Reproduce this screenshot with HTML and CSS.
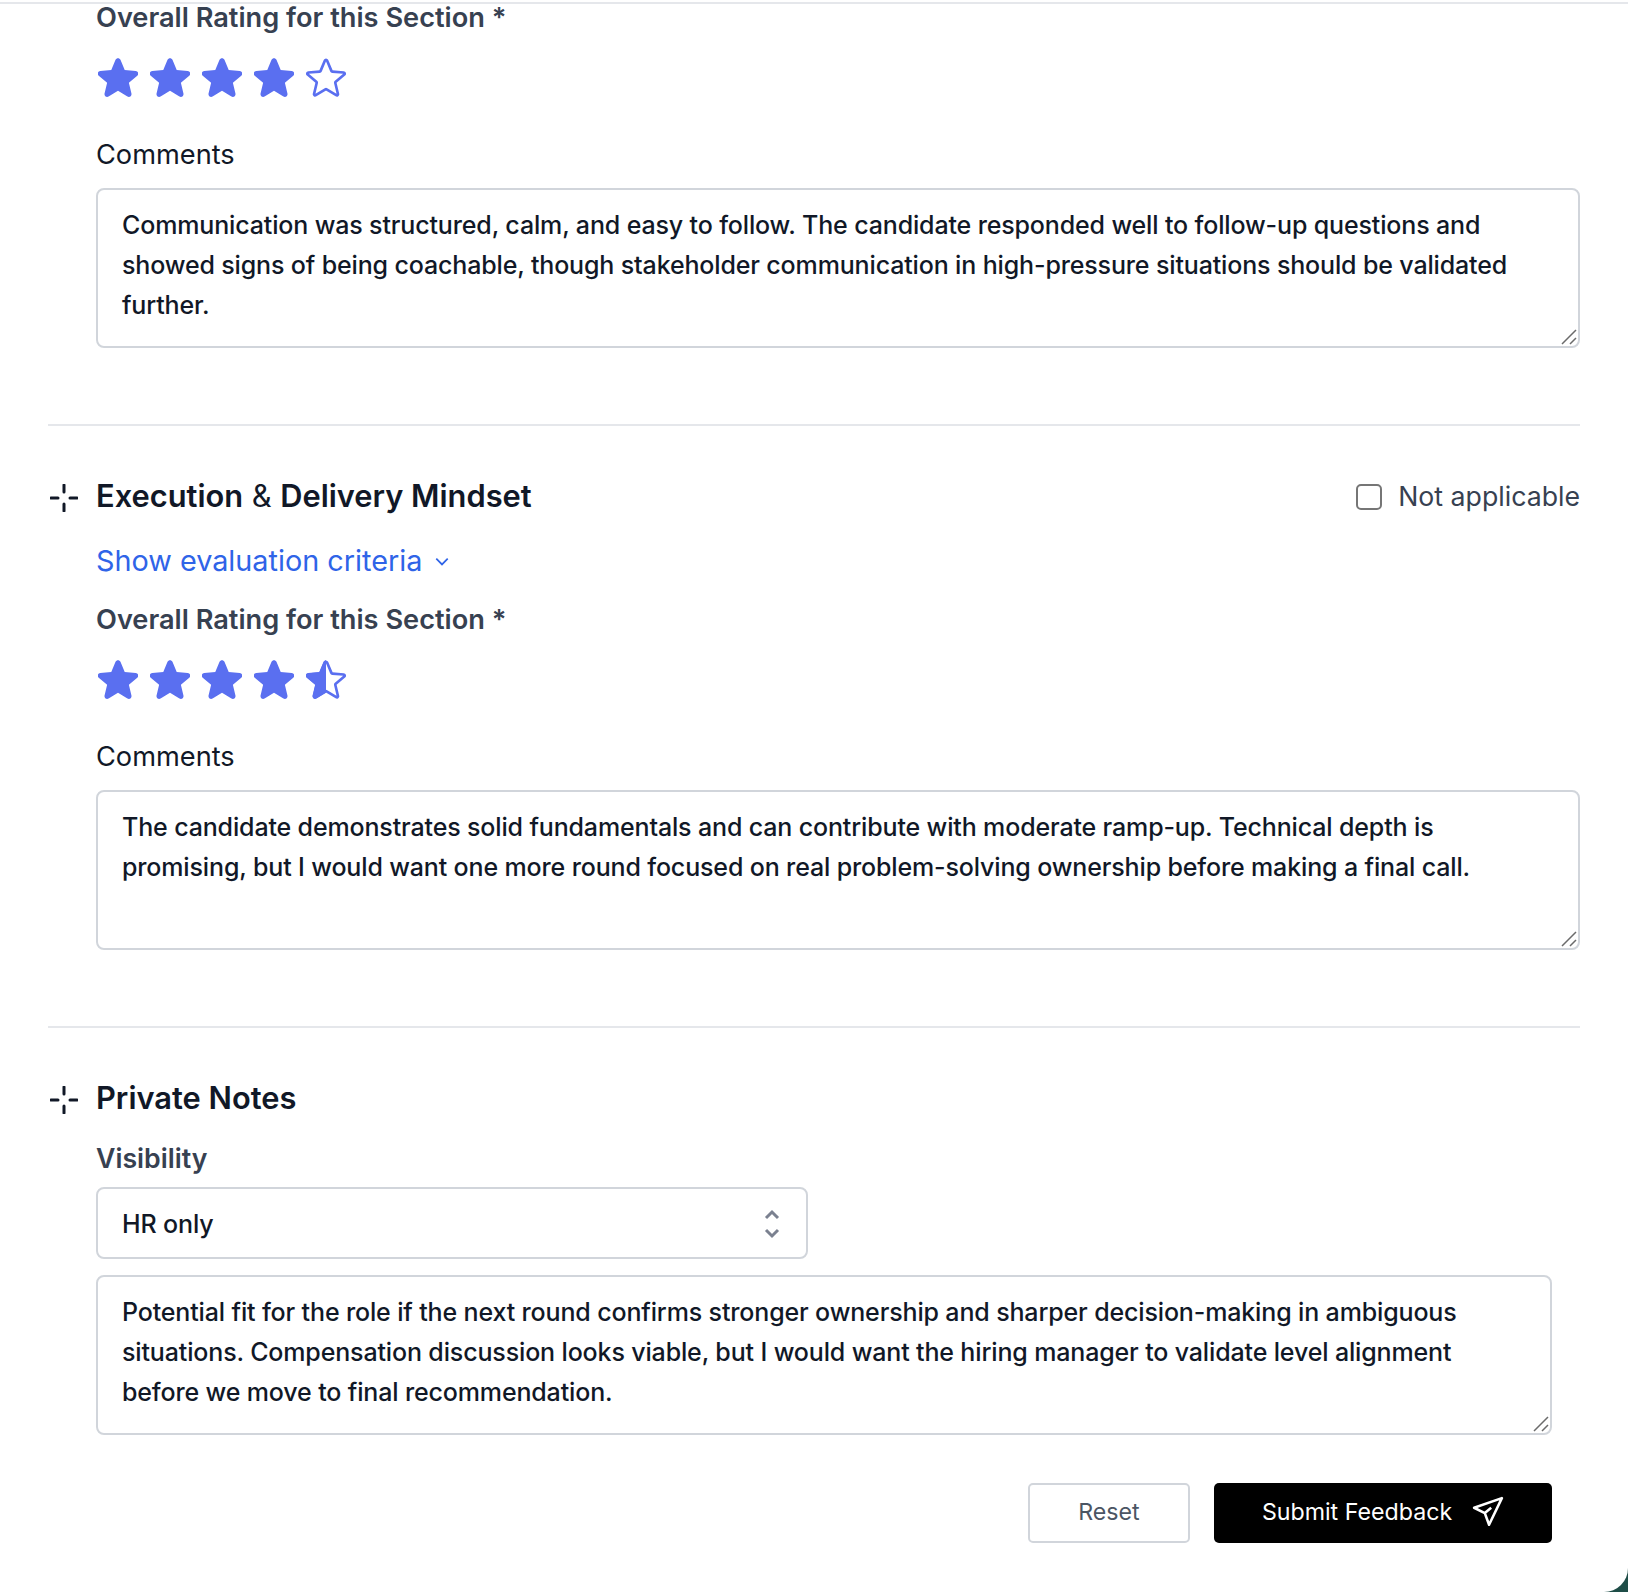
FILE: index.html
```html
<!DOCTYPE html>
<html>

<head>
    <meta charset='utf-8'>
    <title>Feedback</title>
    <link rel="stylesheet" href="styles.css">
</head>

<body>
    <svg class="defs">
        <symbol id="star_full" viewBox="2.2 2.3 19.6 19.6">
            <path class="fill" d="M10.788 3.21c.448-1.077 1.976-1.077 2.424 0l2.082 5.006 5.404.434c1.164.093 1.636 1.545.749 2.305l-4.117 3.527 1.257 5.273c.271 1.136-.964 2.033-1.96 1.425L12 18.354 7.373 21.18c-.996.608-2.231-.29-1.96-1.425l1.257-5.273-4.117-3.527c-.887-.76-.415-2.212.749-2.305l5.404-.434 2.082-5.005Z"/>
        </symbol>
        <symbol id="star_empty" viewBox="2.2 2.3 19.6 19.6">
            <path class="empty" d="M11.48 3.499a.562.562 0 0 1 1.04 0l2.125 5.111a.563.563 0 0 0 .475.345l5.518.442c.499.04.701.663.321.988l-4.204 3.602a.563.563 0 0 0-.182.557l1.285 5.385a.562.562 0 0 1-.84.61l-4.725-2.885a.562.562 0 0 0-.586 0L6.982 20.54a.562.562 0 0 1-.84-.61l1.285-5.386a.562.562 0 0 0-.182-.557l-4.204-3.602a.562.562 0 0 1 .321-.988l5.518-.442a.563.563 0 0 0 .475-.345L11.48 3.5Z"/>
        </symbol>
        <symbol id="star_half" viewBox="2.2 2.3 19.6 19.6">
            <path class="empty" d="M11.48 3.499a.562.562 0 0 1 1.04 0l2.125 5.111a.563.563 0 0 0 .475.345l5.518.442c.499.04.701.663.321.988l-4.204 3.602a.563.563 0 0 0-.182.557l1.285 5.385a.562.562 0 0 1-.84.61l-4.725-2.885a.562.562 0 0 0-.586 0L6.982 20.54a.562.562 0 0 1-.84-.61l1.285-5.386a.562.562 0 0 0-.182-.557l-4.204-3.602a.562.562 0 0 1 .321-.988l5.518-.442a.563.563 0 0 0 .475-.345L11.48 3.5Z"/>
            <path class="fill" d="M12 2.4c-.49 0-.98.27-1.212.81L8.706 8.215l-5.404.434c-1.164.093-1.636 1.545-.749 2.305l4.117 3.527-1.257 5.273c-.271 1.135.964 2.033 1.96 1.425L12 18.354V2.4Z"/>
        </symbol>
        <symbol id="grip" viewBox="0 0 16 16">
            <path d="M1 15L15 1M9 15l6-6"/>
        </symbol>
        <symbol id="spark" viewBox="0 0 28 28">
            <path d="M14 1v7M14 20v7M1 14h7M20 14h7"/>
        </symbol>
    </svg>

    <div class="card">
        <div class="section">
            <div class="rating_label">Overall Rating for this Section *</div>
            <div class="stars">
                <svg class="star"><use href="#star_full"/></svg>
                <svg class="star"><use href="#star_full"/></svg>
                <svg class="star"><use href="#star_full"/></svg>
                <svg class="star"><use href="#star_full"/></svg>
                <svg class="star"><use href="#star_empty"/></svg>
            </div>
            <label class="comments_label">Comments</label>
            <div class="text_box">Communication was structured, calm, and easy to follow. The candidate responded well to follow-up questions and showed signs of being coachable, though stakeholder communication in high-pressure situations should be validated further.<svg class="grip"><use href="#grip"/></svg></div>
        </div>

        <div class="section">
            <div class="section_head">
                <svg class="spark"><use href="#spark"/></svg>
                <h2><b>Execution</b> &amp; <b>Delivery Mindset</b></h2>
                <label class="na"><span class="check"></span>Not applicable</label>
            </div>
            <div class="criteria">Show evaluation criteria<svg class="chevron" viewBox="0 0 14 14"><path d="M2 5l5 5 5-5"/></svg></div>
            <div class="rating_label">Overall Rating for this Section *</div>
            <div class="stars">
                <svg class="star"><use href="#star_full"/></svg>
                <svg class="star"><use href="#star_full"/></svg>
                <svg class="star"><use href="#star_full"/></svg>
                <svg class="star"><use href="#star_full"/></svg>
                <svg class="star"><use href="#star_half"/></svg>
            </div>
            <label class="comments_label">Comments</label>
            <div class="text_box">The candidate demonstrates solid fundamentals and can contribute with moderate ramp-up. Technical depth is promising, but I would want one more round focused on real problem-solving ownership before making a final call.<svg class="grip"><use href="#grip"/></svg></div>
        </div>

        <div class="section last">
            <div class="section_head">
                <svg class="spark"><use href="#spark"/></svg>
                <h2><b>Private Notes</b></h2>
            </div>
            <div class="visibility_label">Visibility</div>
            <div class="select_box">HR only<svg class="updown" viewBox="0 0 16 32"><path d="M2 10l6-6 6 6M2 22l6 6 6-6"/></svg></div>
            <div class="text_box notes">Potential fit for the role if the next round confirms stronger ownership and sharper decision-making in ambiguous situations. Compensation discussion looks viable, but I would want the hiring manager to validate level alignment before we move to final recommendation.<svg class="grip"><use href="#grip"/></svg></div>
            <div class="actions">
                <button class="btn_reset">Reset</button>
                <button class="btn_submit">Submit Feedback<svg class="send" viewBox="0 0 30 30"><path d="M28 2L2 11l10 5 4 11L28 2zM12 16l6-5"/></svg></button>
            </div>
        </div>
    </div>
</body>

</html>
```

FILE: styles.css
```css
* {
    margin: 0;
    padding: 0;
    box-sizing: border-box;
}

html,
body {
    height: 1592px;
    overflow: hidden;
    background-color: #1e4d47;
}

body {
    font-family: "Inter", "Liberation Sans", sans-serif;
    color: #111827;
}

.defs {
    display: none;
}

.card {
    height: 1592px;
    background-color: white;
    border-top: 2px solid white;
    border-bottom-right-radius: 24px;
    padding: 0 48px;
}

.card::before {
    content: "";
    display: block;
    height: 2px;
    margin: 0 -48px -1px;
    background-color: #e5e7eb;
}

.section {
    border-bottom: 2px solid #e5e7eb;
    padding-bottom: 76px;
    margin-bottom: 51px;
}

.last {
    border-bottom: none;
    padding-bottom: 0;
    margin-bottom: 0;
}

.rating_label {
    margin-left: 48px;
    font-size: 27.2px;
    line-height: 30px;
    font-weight: 560;
    color: #374151;
}

.stars {
    display: flex;
    gap: 12px;
    margin: 25px 0 0 50px;
    height: 40px;
}

.star {
    width: 40px;
    height: 40px;
}

.fill {
    fill: #5a6ff0;
}

.empty {
    fill: white;
    stroke: #5a6ff0;
    stroke-width: 1.3;
}

.comments_label {
    display: block;
    margin: 41px 0 17px 48px;
    font-size: 27.2px;
    line-height: 32px;
    color: #111827;
}

.text_box {
    position: relative;
    margin-left: 48px;
    height: 160px;
    padding: 15px 24px;
    border: 2px solid #d1d5db;
    border-radius: 8px;
    font-size: 25px;
    font-weight: 450;
    line-height: 40px;
    letter-spacing: -0.145px;
    color: #111827;
}

.grip {
    position: absolute;
    right: 1px;
    bottom: 1px;
    width: 16px;
    height: 16px;
    fill: none;
    stroke: #6b6b6b;
    stroke-width: 1.5;
}

.section_head {
    display: flex;
    align-items: center;
    height: 40px;
    padding-bottom: 2px;
}

.spark {
    width: 28px;
    height: 28px;
    margin: 4px 18px 0 2px;
    fill: none;
    stroke: #111827;
    stroke-width: 3;
    stroke-linecap: round;
}

h2 {
    flex: 1;
    font-size: 30.8px;
    line-height: 38px;
    font-weight: 400;
    color: #111827;
}

h2 b {
    font-weight: 620;
}

.na {
    display: flex;
    align-items: center;
    font-size: 26.7px;
    color: #374151;
}

.check {
    width: 26px;
    height: 26px;
    margin: 2px 16px 0 0;
    border: 2px solid #767676;
    border-radius: 5px;
}

.criteria {
    display: flex;
    align-items: center;
    margin: 24px 0 0 48px;
    font-size: 28.8px;
    line-height: 40px;
    color: #2f64e8;
}

.chevron {
    width: 16px;
    height: 16px;
    margin-left: 12px;
    fill: none;
    stroke: #2f64e8;
    stroke-width: 1.5;
}

.criteria + .rating_label {
    margin-top: 24px;
}

.visibility_label {
    margin: 21px 0 11px 48px;
    font-size: 26.7px;
    line-height: 36px;
    font-weight: 560;
    color: #374151;
}

.select_box {
    display: flex;
    align-items: center;
    justify-content: space-between;
    width: 712px;
    height: 72px;
    margin-left: 48px;
    padding: 2px 26px 0 24px;
    border: 2px solid #d1d5db;
    border-radius: 8px;
    font-size: 25px;
    font-weight: 450;
    letter-spacing: -0.145px;
    color: #111827;
}

.updown {
    width: 16px;
    height: 32px;
    fill: none;
    stroke: #7b8190;
    stroke-width: 3;
}

.notes {
    width: 1456px;
    margin-top: 16px;
}

.actions {
    display: flex;
    justify-content: flex-end;
    gap: 24px;
    width: 1504px;
    margin-top: 48px;
}

button {
    height: 60px;
    padding-bottom: 2px;
    border-radius: 5px;
    font-family: inherit;
    font-size: 23.2px;
}

.btn_reset {
    width: 162px;
    background-color: white;
    border: 2px solid #d1d5db;
    color: #4b5563;
}

.btn_submit {
    display: flex;
    align-items: center;
    justify-content: center;
    gap: 20px;
    width: 338px;
    background-color: black;
    border: none;
    color: white;
}

.send {
    width: 32px;
    height: 32px;
    fill: none;
    stroke: white;
    stroke-width: 2.4;
    stroke-linejoin: round;
}
```
